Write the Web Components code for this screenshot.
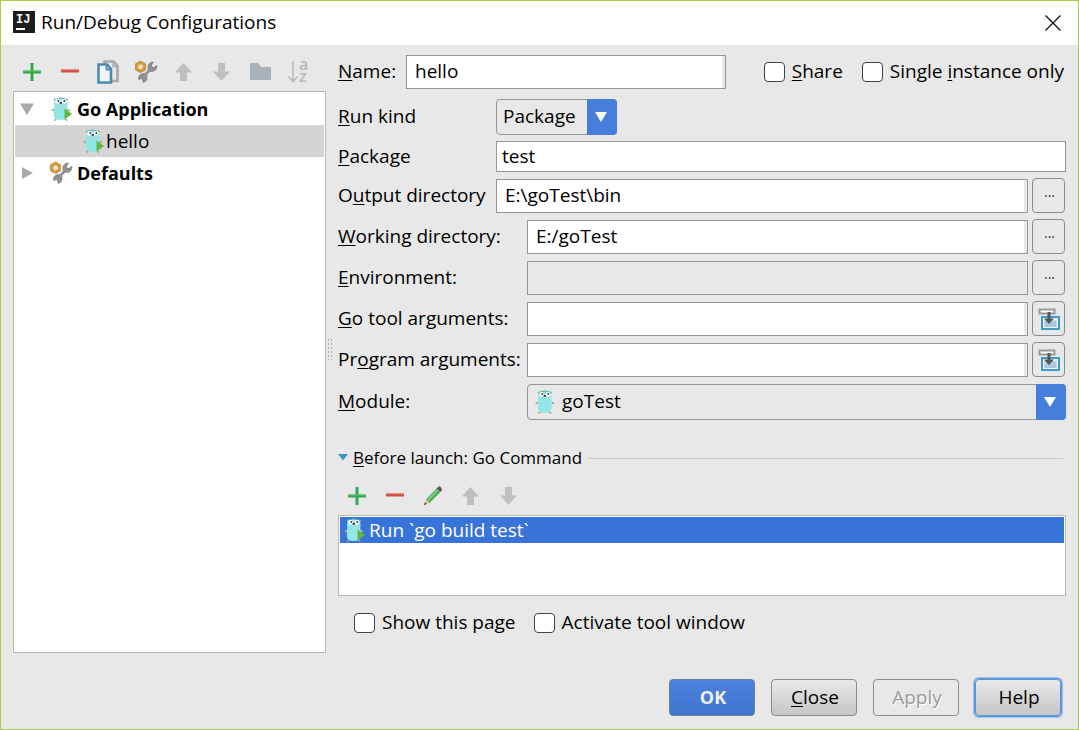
<!DOCTYPE html>
<html lang="en">
<head>
<meta charset="utf-8">
<title>Run/Debug Configurations</title>
<style>
  body { margin: 0; font: 19px/24px "Open Sans", "Noto Sans", sans-serif; color: #000; }
</style>
</head>
<body>
<run-dialog></run-dialog>

<script>
const BASE = `
  *, *::before { box-sizing: border-box; }
  u { text-decoration-thickness: 1px; text-underline-offset: 2px; }
  input, button, select { font: inherit; color: inherit; margin: 0; }
`;

// "_Name:" becomes <u>N</u>ame:
const mnemonic = (s) => (s || '').replace(/_(.)/, '<u>$1</u>');

const define = (name, render) => customElements.define(name, class extends HTMLElement {
  constructor() { super(); this.attachShadow({ mode: 'open' }); }
  connectedCallback() {
    if (!this.shadowRoot.firstChild) this.shadowRoot.innerHTML = render(this);
  }
});

const GOPHER = `
  <path d="M4.800 12.500 3.200 13.500M18.700 12.500l1.600 1M7 22l-1.200 1.300M16.500 22l1.200 1.300" stroke="#b0a090" stroke-width="1.500" stroke-linecap="round"/>
  <circle cx="6" cy="2.700" r="1.300" fill="#74b9bf"/><circle cx="17.500" cy="2.700" r="1.300" fill="#74b9bf"/>
  <path d="M5 7Q5 .7 11.800 .7T18.500 7Q18 10 18.700 13V18Q18.700 23 11.800 23T4.800 18V13Q5.500 10 5 7Z" fill="#93e6e8"/>
  <path d="M6 3.500Q7.500 1 11.800 1T17.500 3.500" stroke="#66a9ae" stroke-width="1" fill="none"/>
  <circle cx="8.600" cy="4.300" r="2.400" fill="#fff"/><circle cx="15" cy="4.300" r="2.400" fill="#fff"/>
  <circle cx="9.300" cy="4" r=".9" fill="#333"/><circle cx="15.300" cy="4" r=".9" fill="#333"/>
  <ellipse cx="11.800" cy="6.800" rx="1.700" ry="1.300" fill="#d9c9b4"/><ellipse cx="11.800" cy="5.800" rx="1.300" ry=".9" fill="#222"/>`;

const ICONS = {
  plus: '<path d="M3 10.500h18v3H3z" fill="#32a852"/><path d="M10.500 3h3v18h-3z" fill="#32a852"/><path d="M3 10.500h18v1H3z" fill="#5cc277"/>',
  minus: '<path d="M3 9.500h18v3H3z" fill="#cf4a3e"/><path d="M3 9.500h18v1H3z" fill="#e2796d"/>',
  copy: '<path d="M8.500 1.500h9l4 4.500v15h-13z" fill="#e8e8e8" stroke="#a9a9a9" stroke-width="2.600"/><path d="M17 1v5.500h5" fill="none" stroke="#a9a9a9" stroke-width="1.500"/><path d="M2.500 4.500h8.500l4 4.500v13.500h-12.500z" fill="#f1f5f8" stroke="#4c8ab2" stroke-width="2.600"/><path d="M10.500 4v5.500h5" fill="none" stroke="#4c8ab2" stroke-width="1.800"/>',
  tools: '<path d="m6.500 1 5 2.800v6l-5 2.800-5-2.800v-6z" fill="#d99a3f" stroke="#b98436" stroke-width=".8"/><circle cx="6.500" cy="6.800" r="2.400" fill="#f5e8d0"/><path d="M19.500 2.200 17.300 5l.5 2 2.200.6 2.800-2.100a5 5 0 0 1-5.300 5.800l-1.700 0-3 3.200 0 2a4.600 4.600 0 0 1-3.600 5.800l-.4-2.600-1.500-1.200-2.600.8a4.600 4.600 0 0 1 5.200-5.600l1 0 3.200-3.200 0-2a5 5 0 0 1 5.400-6.300z" fill="#929292" stroke="#828282" stroke-width="1"/>',
  up: '<path d="M11.500 3 20 12.500h-5V21H8v-8.500H3z" fill="#bfbfbf"/>',
  down: '<path d="M11.500 21 20 11.500h-5V3H8v8.500H3z" fill="#bfbfbf"/>',
  folder: '<path d="M2 3h8l3 4h10v13H2z" fill="#a9b2b8"/>',
  sort: '<path d="M7 1v20M2.500 16.500 7 21.500l4.500-5" fill="none" stroke="#b9b9b9" stroke-width="1.600"/><text font-size="16" font-weight="600" fill="#b9b9b9"><tspan x="13" y="10">a</tspan><tspan x="13" y="22">z</tspan></text>',
  pencil: '<path d="M3 21 5 15.500 8.500 19z" fill="#f0c27b"/><path d="M3 21l1-2.700 1.700 1.700z" fill="#333"/><path d="M5 15.500 15.500 4.500 19.500 8 8.500 19z" fill="#4fae57"/><path d="M6 16.300 16 5.500l1 .900-10 11z" fill="#8bd38d"/><path d="m15.500 4.500 2-2q3-.500 3.500 3.500L19.500 8z" fill="#555"/>',
  insert: '<path d="M2.500 2.500h15v4h-15z" fill="#fff" stroke="#999" stroke-width="2"/><path d="M5 10h17v12H5z" fill="#e8f2f8" stroke="#3f9cca" stroke-width="2"/><path d="M7.500 13.500h12v6.500h-12z" fill="#a9c8da"/><path d="M10.500 5h3v6.500H17L12 17l-5-5.500h3.500z" fill="#555"/>',
  gopher: GOPHER,
  gorun: GOPHER + '<path d="m15.500 11.500 7.500 5.500-7.500 5.500z" fill="#62b543"/>',
  open: '<path d="M5 6.500h14L12 18z" fill="#a9a9a9"/>',
  closed: '<path d="M7 6v12l11-6z" fill="#a9a9a9"/>',
  close: '<path d="m4.500 4.500 15 15m0-15-15 15" stroke="#111" stroke-width="1.300"/>',
  app: '<path d="M1 0h22v22H1z" fill="#1c1c1c"/><text x="4" y="12" font-size="12" font-weight="700" font-family="Liberation Mono" fill="#fff">IJ</text><path d="M4 17h9v2H4z" fill="#fff"/>',
};

define('ui-icon', (el) => `
  <style>:host { display: block; width: 24px; height: 24px; flex: none; } svg { display: block; overflow: visible; }</style>
  <svg width="24" height="24" viewBox="0 0 24 24" aria-hidden="true" fill="none">${ICONS[el.getAttribute('name')]}</svg>`);

define('tool-button', (el) => `
  <style>${BASE}
    :host { display: block; flex: none; }
    button { display: grid; place-items: center; width: 38px; height: 38px; padding: 0; border: 0; background: none; }
  </style>
  <button type="button" aria-label="${el.getAttribute('label')}"><ui-icon name="${el.getAttribute('icon')}"></ui-icon></button>`);

define('tool-bar', () => `
  <style>:host { display: flex; }</style><slot></slot>`);

define('check-box', (el) => `
  <style>${BASE}
    :host { display: block; flex: none; }
    label { display: flex; align-items: center; gap: 7px; white-space: nowrap; }
    span { padding-bottom: 2px; }
    input { appearance: none; width: 21px; height: 20px; border: 1px solid #444; border-radius: 4px; background: #fff; }
  </style>
  <label><input type="checkbox"><span>${mnemonic(el.getAttribute('label'))}</span></label>`);

define('push-button', (el) => `
  <style>${BASE}
    :host { display: block; }
    button { display: block; width: 86px; height: 37px; padding: 0 0 2px 2px; border: 1px solid #8c8c8c; border-radius: 4px;
      background: linear-gradient(#e9e9e9, #c6c6c6); }
    :host([kind=primary]) button { color: #f0f0f0; font-size: 18px; font-weight: 700; border-color: #6b7f9f; background: linear-gradient(#4983e0, #4074cc); }
    button:disabled { color: #9b9b9b; background: #e8e8e8; text-shadow: 1px 1px #fff; }
    :host([kind=focused]) button { border-color: #5a96d8; box-shadow: 0 0 0 1px #5a96d8, 0 0 1px 2px #9cc3ee; }
  </style>
  <button type="button" ${el.hasAttribute('disabled') ? 'disabled' : ''}>${mnemonic(el.getAttribute('label'))}</button>`);

// Label and text box, with an optional button at the end
define('text-field', (el) => {
  const a = (n) => el.getAttribute(n);
  const end = a('end');
  return `
  <style>${BASE}
    :host { display: flex; align-items: end; }
    label { flex: none; width: var(--label, auto); align-self: center; padding-bottom: 2px; white-space: nowrap; }
    input { flex: 1; min-width: 0; width: 0; height: 34px; padding: 0 8px 2px; border: 1px solid #969696; border-radius: 0;
      background: #fff; box-shadow: inset -3px 0 #e8e8e8; outline: 0; }
    input:read-only { background: #e8e8e8; }
    :host([plain]) input { height: 31px; padding: 0 5px 1px; box-shadow: none; }
    button { flex: none; display: grid; place-items: center; width: 33px; height: 35px; margin: 0 1px 0 4px; padding: 0;
      border: 1px solid #8c8c8c; border-radius: 4px; background: #e8e8e8; }
    .dots { font-size: 14px; line-height: 20px; padding: 0 0 8px 2px; color: #333; }
  </style>
  <label for="box">${mnemonic(a('label'))}</label>
  <input id="box" type="text" value="${a('value') || ''}" ${el.hasAttribute('locked') ? 'readonly' : ''}>
  ${end === 'browse' ? '<button type="button" aria-label="Browse"><span class="dots">...</span></button>' : ''}
  ${end === 'insert' ? '<button type="button" aria-label="Expand"><ui-icon name="insert"></ui-icon></button>' : ''}`;
});

define('select-field', (el) => `
  <style>${BASE}
    :host { display: flex; align-items: center; }
    label { flex: none; width: var(--label, auto); padding-bottom: 2px; white-space: nowrap; }
    .box { display: grid; grid-template-columns: auto 30px; align-items: center; width: var(--box, 100%); }
    :host([wide]) { padding-top: 1px; }
    :host([wide]) .box { flex: 1; grid-template-columns: 1fr 30px; }
    select { grid-area: 1 / 1 / 2 / 3; width: 100%; height: 36px; padding: 0 34px 2px 6px; border: 1px solid #969696; border-radius: 4px;
      appearance: none; background: #e8e8e8; outline: 0; }
    :host([icon]) select { padding-left: 34px; }
    ui-icon { grid-area: 1 / 1; margin-left: 6px; pointer-events: none; }
    .arrow { grid-area: 1 / 2; display: grid; place-items: center; height: 36px; padding-right: 2px; border-radius: 0 4px 4px 0; background: #477ddb; pointer-events: none; }
  </style>
  <label for="pick">${mnemonic(el.getAttribute('label'))}</label>
  <div class="box">
    <select id="pick"><option>${el.getAttribute('value')}</option></select>
    ${el.hasAttribute('icon') ? `<ui-icon name="${el.getAttribute('icon')}"></ui-icon>` : ''}
    <span class="arrow"><svg width="12" height="10" viewBox="0 0 12 10"><path d="M0 0h12L6 10z" fill="#fff"/></svg></span>
  </div>`);

define('tree-row', () => `
  <style>
    :host { display: flex; align-items: center; height: 32px; }
    :host([bold]) { font-size: 18px; font-weight: 700; }
    :host([selected]) { background: #d4d4d4; }
    :host([level="2"]) { padding-left: 66px; }
    .text { padding-left: 4px; padding-bottom: 1px; }
    :host([level="2"]) .text { padding-left: 1px; }
    ::slotted(ui-icon[slot=icon]) { margin-left: 10px; }
    :host([level="2"]) ::slotted(ui-icon[slot=icon]) { margin-left: 0; }
  </style>
  <slot name="toggle"></slot><slot name="icon"></slot><span class="text"><slot></slot></span>`);

define('config-tree', () => `
  <style>:host { display: block; box-sizing: border-box; border: 1px solid #b9b9b9; padding: 1px; background: #fff; }</style>
  <slot></slot>`);

define('task-list', () => `
  <style>
    :host { display: block; box-sizing: border-box; min-height: 81px; border: 1px solid #b9b9b9; padding: 1px; background: #fff; }
    .item { display: flex; align-items: center; gap: 3px; height: 26px; padding-left: 2px; background: #3874d8; color: #fff; }
  </style>
  <div class="item"><ui-icon name="gorun"></ui-icon><slot></slot></div>`);

define('section-title', (el) => `
  <style>${BASE}
    :host { display: flex; align-items: center; height: 24px; font-size: 17px; }
    svg { flex: none; margin-right: 5px; }
    .line { flex: 1; height: 1px; margin: 0 3px 0 6px; background: #cbcbcb; }
  </style>
  <svg width="10" height="10" viewBox="0 0 10 10" aria-hidden="true"><path d="M0 1h10L5 7.500z" fill="#3f93bf"/></svg>
  <span>${mnemonic(el.getAttribute('label'))}</span><span class="line"></span>`);

define('title-bar', () => `
  <style>${BASE}
    :host { display: flex; align-items: center; gap: 5px; height: 44px; padding: 0 13px 0 11px; background: #fff; }
    h1 { flex: 1; margin: 0; padding-bottom: 2px; font: inherit; }
    button { padding: 0; border: 0; background: none; }
  </style>
  <ui-icon name="app"></ui-icon><h1><slot></slot></h1>
  <button type="button" aria-label="Close window"><ui-icon name="close"></ui-icon></button>`);

define('run-dialog', () => `
  <style>${BASE}
    :host { display: flex; flex-direction: column; box-sizing: border-box; min-height: 100vh; border: 1px solid #a9cf46; background: #e8e8e8; }
    main { flex: 1; display: grid; grid-template-columns: 313px 12px minmax(0, 1fr); padding: 0 12px; }
    aside { display: flex; flex-direction: column; padding-top: 8px; }
    config-tree { flex: 1; }
    .grip { align-self: center; display: block; width: 6px; height: 22px; margin-left: 1px; background: radial-gradient(circle, #b0b0b0 1px, transparent 1px) 0 0 / 3px 4px; }
    form { padding-top: 10px; }
    .name { display: flex; align-items: center; gap: 19px; margin-bottom: 10px; padding-right: 2px; }
    .name text-field { flex: 1; margin-right: 19px; --label: 68px; }
    .rows { display: grid; gap: 6px; --label: 158px; }
    .rows .far { --label: 189px; }
    .kind { --box: 121px; }
    section-title { margin-top: 26px; }
    form > tool-bar { margin-top: 7px; }
    .checks { display: flex; gap: 18px; padding: 14px 16px 0; }
    footer { display: flex; justify-content: flex-end; gap: 16px; padding: 26px 17px 13px; }
  </style>
  <title-bar>Run/Debug Configurations</title-bar>
  <main>
    <aside>
      <tool-bar>
        <tool-button icon="plus" label="Add"></tool-button>
        <tool-button icon="minus" label="Remove"></tool-button>
        <tool-button icon="copy" label="Copy"></tool-button>
        <tool-button icon="tools" label="Edit defaults"></tool-button>
        <tool-button icon="up" label="Move up"></tool-button>
        <tool-button icon="down" label="Move down"></tool-button>
        <tool-button icon="folder" label="New folder"></tool-button>
        <tool-button icon="sort" label="Sort"></tool-button>
      </tool-bar>
      <config-tree>
        <tree-row bold><ui-icon slot="toggle" name="open"></ui-icon><ui-icon slot="icon" name="gorun"></ui-icon>Go Application</tree-row>
        <tree-row level="2" selected><ui-icon slot="icon" name="gorun"></ui-icon>hello</tree-row>
        <tree-row bold><ui-icon slot="toggle" name="closed"></ui-icon><ui-icon slot="icon" name="tools"></ui-icon>Defaults</tree-row>
      </config-tree>
    </aside>
    <span class="grip"></span>
    <form>
      <div class="name">
        <text-field label="_Name:" value="hello"></text-field>
        <check-box label="_Share"></check-box>
        <check-box label="Single _instance only"></check-box>
      </div>
      <div class="rows">
        <select-field class="kind" label="_Run kind" value="Package"></select-field>
        <text-field plain label="_Package" value="test"></text-field>
        <text-field label="O_utput directory" value="E:\\goTest\\bin" end="browse"></text-field>
        <text-field class="far" label="_Working directory:" value="E:/goTest" end="browse"></text-field>
        <text-field class="far" label="_Environment:" locked end="browse"></text-field>
        <text-field class="far" label="_Go tool arguments:" end="insert"></text-field>
        <text-field class="far" label="Pr_ogram arguments:" end="insert"></text-field>
        <select-field class="far" wide icon="gopher" label="_Module:" value="goTest"></select-field>
      </div>
      <section-title label="_Before launch: Go Command"></section-title>
      <tool-bar>
        <tool-button icon="plus" label="Add task"></tool-button>
        <tool-button icon="minus" label="Remove task"></tool-button>
        <tool-button icon="pencil" label="Edit task"></tool-button>
        <tool-button icon="up" label="Move task up"></tool-button>
        <tool-button icon="down" label="Move task down"></tool-button>
      </tool-bar>
      <task-list>Run \`go build test\`</task-list>
      <div class="checks">
        <check-box label="Show this page"></check-box>
        <check-box label="Activate tool window"></check-box>
      </div>
    </form>
  </main>
  <footer>
    <push-button kind="primary" label="OK"></push-button>
    <push-button label="_Close"></push-button>
    <push-button disabled label="Apply"></push-button>
    <push-button kind="focused" label="Help"></push-button>
  </footer>`);
</script>
</body>
</html>
